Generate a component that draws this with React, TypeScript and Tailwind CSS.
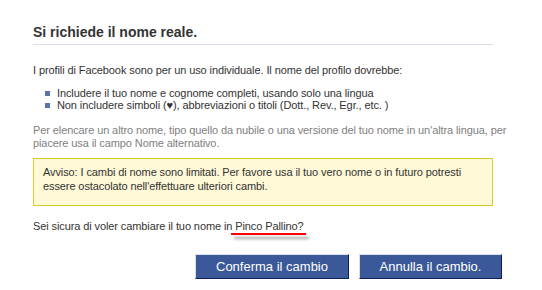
import React from 'react';

const App: React.FC = () => {
  const rules = [
    'Includere il tuo nome e cognome completi, usando solo una lingua',
    'Non includere simboli (\u2665), abbreviazioni o titoli (Dott., Rev., Egr., etc. )',
  ];

  return (
    <div className="w-[542px] h-[290px] bg-white overflow-hidden font-['Liberation_Sans',Arial,sans-serif] text-[11px] tracking-[-0.1px] text-[#333333]">
      <div className="pt-[24px] pl-[33px] w-[493px]">
        {/* Header */}
        <h2 className="text-[14px] leading-[17px] font-bold tracking-normal text-[#333333] pb-[3px] border-b border-[#d8dfea]">
          Si richiede il nome reale.
        </h2>

        <p className="mt-[19px] leading-[13px]">
          I profili di Facebook sono per un uso individuale. Il nome del profilo dovrebbe:
        </p>

        <ul className="mt-[10px] pl-[12px]">
          {rules.map((rule) => (
            <li key={rule} className="flex items-center leading-[12px] gap-[4px]">
              <span className="w-[5px] h-[5px] bg-[#5a73a8] shrink-0" />
              <span className="pl-[3px]">{rule}</span>
            </li>
          ))}
        </ul>

        <p className="mt-[13px] leading-[13px] text-[#808080] whitespace-nowrap">
          Per elencare un altro nome, tipo quello da nubile o una versione del tuo nome in un'altra lingua, per
          <br />
          piacere usa il campo Nome alternativo.
        </p>

        {/* Warning box */}
        <div className="mt-[8px] border border-[#e2c822] bg-[#fff9d7] pl-[9px] pr-[8px] pt-[6px] pb-[12px] leading-[14px]">
          Avviso: I cambi di nome sono limitati. Per favore usa il tuo vero nome o in futuro potresti
          <br />
          essere ostacolato nell'effettuare ulteriori cambi.
        </div>

        <p className="mt-[14px] leading-[13px]">
          Sei sicura di voler cambiare il tuo nome in{' '}
          <span className="relative">
            Pinco Pallino?
            <span className="absolute left-[-4px] right-[-2px] top-[13px] h-[2px] bg-[#ff0000] shadow-[3px_4px_3px_rgba(0,0,0,0.4)]" />
          </span>
        </p>

        {/* Actions */}
        <div className="mt-[21px] w-[469px] flex justify-end gap-[10px]">
          <button className="w-[154px] h-[25px] bg-[#3b5998] border border-t-[#d9dfea] border-l-[#d9dfea] border-b-[#0e1f5b] border-r-[#0e1f5b] text-white text-[13px] tracking-normal font-['Liberation_Sans',Arial,sans-serif]">
            Conferma il cambio
          </button>
          <button className="w-[143px] h-[25px] bg-[#3b5998] border border-t-[#d9dfea] border-l-[#d9dfea] border-b-[#0e1f5b] border-r-[#0e1f5b] text-white text-[13px] tracking-normal font-['Liberation_Sans',Arial,sans-serif]">
            Annulla il cambio.
          </button>
        </div>
      </div>
    </div>
  );
};

export default App;
